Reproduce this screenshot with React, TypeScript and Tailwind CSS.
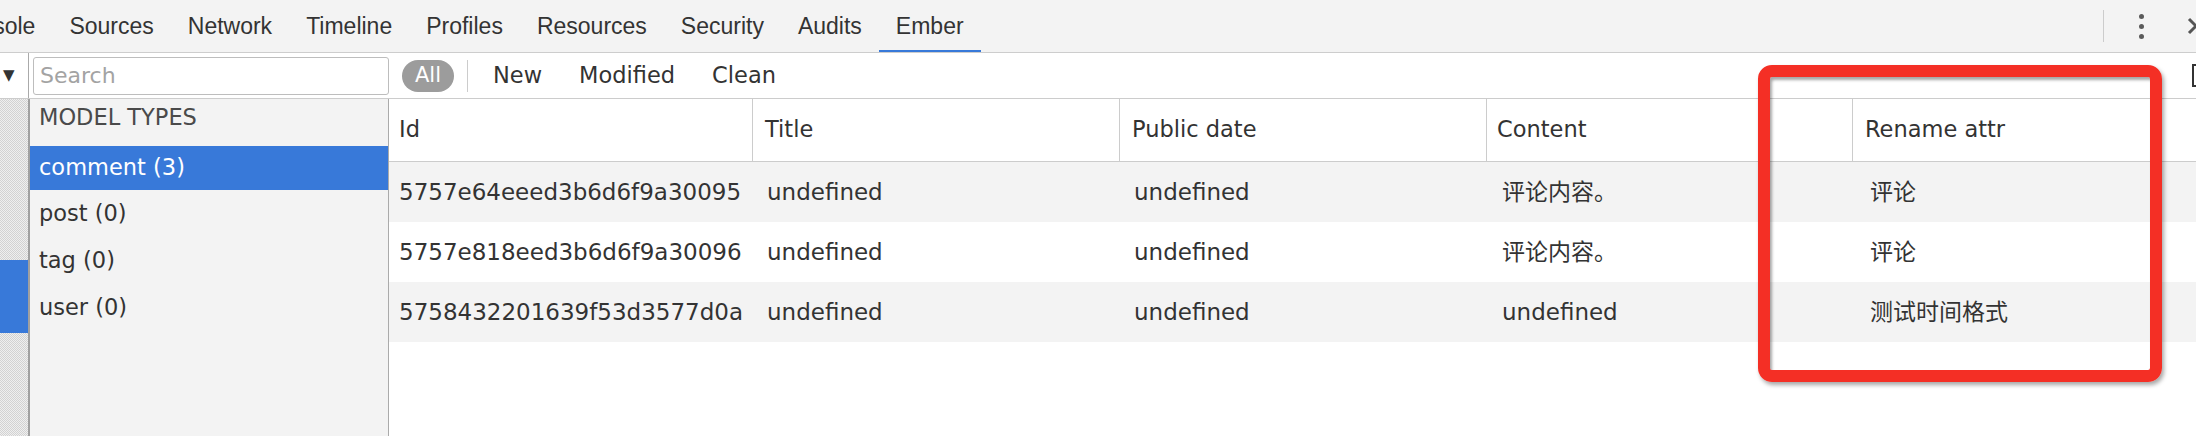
import React from 'react';

const tabs = ['Console', 'Sources', 'Network', 'Timeline', 'Profiles', 'Resources', 'Security', 'Audits', 'Ember'];

const modelTypes = [
    { name: 'comment', count: 3 },
    { name: 'post', count: 0 },
    { name: 'tag', count: 0 },
    { name: 'user', count: 0 },
];

// header padding / body padding differ a little per column in the reference
const columns = [
    { label: 'Id', width: 'w-[364px] shrink-0', head: 'pl-[10px] border-r border-[#cccccc]', cell: 'pl-[10px]' },
    { label: 'Title', width: 'w-[367px] shrink-0', head: 'pl-[12px] border-r border-[#cccccc]', cell: 'pl-[14px]' },
    { label: 'Public date', width: 'w-[367px] shrink-0', head: 'pl-[12px] border-r border-[#cccccc]', cell: 'pl-[14px]' },
    { label: 'Content', width: 'w-[366px] shrink-0', head: 'pl-[10px] border-r border-[#cccccc]', cell: 'pl-[15px]' },
    { label: 'Rename attr', width: 'flex-1', head: 'pl-[12px]', cell: 'pl-[17px]' },
];

const rows = [
    ['5757e64eeed3b6d6f9a30095', 'undefined', 'undefined', '评论内容。', '评论'],
    ['5757e818eed3b6d6f9a30096', 'undefined', 'undefined', '评论内容。', '评论'],
    ['5758432201639f53d3577d0a', 'undefined', 'undefined', 'undefined', '测试时间格式'],
];

const TabBar: React.FC = () => (
    <div className="flex h-[53px] shrink-0 items-stretch border-b border-[#cdcdcd] bg-[#f3f3f3] font-['Liberation_Sans',sans-serif] text-[23px] text-[#333333]">
        <div className="flex ml-[-66px] shrink-0">
            {tabs.map((tab) => (
                <div
                    key={tab}
                    className={
                        tab === 'Ember'
                            ? 'flex items-center px-[17px] shadow-[inset_0_-2px_0_#3879d9]'
                            : 'flex items-center px-[17px]'
                    }
                >
                    {tab}
                </div>
            ))}
        </div>
        <div className="flex-1" />
        <div className="flex shrink-0 items-center">
            <div className="h-[32px] w-px bg-[#cccccc]" />
            <div className="ml-[34px] flex w-[6px] flex-col items-center gap-[5px]">
                <span className="block h-[5px] w-[5px] rounded-full bg-[#5a5a5a]" />
                <span className="block h-[5px] w-[5px] rounded-full bg-[#5a5a5a]" />
                <span className="block h-[5px] w-[5px] rounded-full bg-[#5a5a5a]" />
            </div>
            <div className="ml-[43px] w-[9px] overflow-hidden">
                <svg width="18" height="18" viewBox="0 0 18 18" className="block">
                    <path d="M2 2 L16 16 M16 2 L2 16" stroke="#555555" strokeWidth="3" fill="none" />
                </svg>
            </div>
        </div>
    </div>
);

const Toolbar: React.FC = () => (
    <div className="flex h-[46px] shrink-0 items-center border-b border-[#cccccc] bg-white font-['DejaVu_Sans',sans-serif] text-[22.5px] text-[#333333]">
        <div className="flex h-full w-[29px] shrink-0 items-center border-r border-[#aaaaaa] pl-[3px] text-[15px] text-[#333333]">
            ▼
        </div>
        <div className="ml-[4px] flex h-[38px] w-[356px] shrink-0 items-center rounded-[3px] border border-[#bdbdbd] pl-[6px] text-[22px] text-[#a3a3a3]">
            Search
        </div>
        <div className="ml-[13px] flex h-[32px] w-[52px] shrink-0 items-center justify-center rounded-full bg-[#9c9c9c] text-[21px] text-white">
            All
        </div>
        <div className="ml-[13px] h-[32px] w-px shrink-0 bg-[#cccccc]" />
        <div className="ml-[25px] shrink-0">New</div>
        <div className="ml-[37px] shrink-0">Modified</div>
        <div className="ml-[37px] shrink-0">Clean</div>
        <div className="flex-1" />
        <div className="w-[4px] shrink-0 overflow-hidden">
            <div className="h-[23px] w-[22px] border-2 border-[#333333]" />
        </div>
    </div>
);

const Sidebar: React.FC = () => (
    <div className="flex w-[359px] shrink-0 flex-col border-r border-[#aaaaaa] bg-[#f3f3f3] font-['DejaVu_Sans',sans-serif] text-[22.5px] text-[#333333]">
        <div className="flex h-[47px] items-center pb-[10px] pl-[9px] text-[#4a4a4a]">MODEL TYPES</div>
        {modelTypes.map((type, i) => (
            <div
                key={type.name}
                className={
                    i === 0
                        ? 'flex h-[44px] items-center bg-[#3879d9] pl-[9px] text-white'
                        : 'flex h-[47px] items-center pl-[9px]'
                }
            >
                {type.name} ({type.count})
            </div>
        ))}
    </div>
);

const RecordsTable: React.FC = () => (
    <div className="flex min-w-0 flex-1 flex-col bg-white font-['DejaVu_Sans','Noto_Sans_CJK_SC',sans-serif] text-[#333333]">
        <div className="flex h-[63px] shrink-0 border-b border-[#cccccc] text-[22.5px]">
            {columns.map((col) => (
                <div key={col.label} className={`${col.width} ${col.head} flex items-center`}>
                    {col.label}
                </div>
            ))}
        </div>
        {rows.map((row, r) => (
            <div
                key={row[0]}
                className={r % 2 === 0 ? 'flex h-[60px] shrink-0 bg-[#f3f3f3] text-[23px]' : 'flex h-[60px] shrink-0 bg-white text-[23px]'}
            >
                {row.map((value, c) => (
                    <div key={c} className={`${columns[c].width} ${columns[c].cell} flex items-center whitespace-nowrap`}>
                        {value}
                    </div>
                ))}
            </div>
        ))}
    </div>
);

export default function App() {
    return (
        <div className="relative flex h-[436px] w-[2196px] flex-col overflow-hidden bg-white">
            <TabBar />
            <Toolbar />
            <div className="flex min-h-0 flex-1">
                <div className="w-[30px] shrink-0 border-r-2 border-[#a0a0a0] bg-[image:repeating-conic-gradient(#d2d2d2_0%_25%,#efefef_0%_50%)] bg-[length:2px_2px]">
                    <div className="mt-[161px] h-[73px] bg-[#3879d9]" />
                </div>
                <Sidebar />
                <RecordsTable />
            </div>
            {/* annotation box drawn over the screenshot */}
            <div className="pointer-events-none absolute left-[1758px] top-[65px] h-[317px] w-[404px] rounded-[14px] border-[12px] border-[#f42f25] shadow-[2px_3px_4px_rgba(0,0,0,0.35),inset_2px_3px_3px_rgba(0,0,0,0.35)]" />
        </div>
    );
}
